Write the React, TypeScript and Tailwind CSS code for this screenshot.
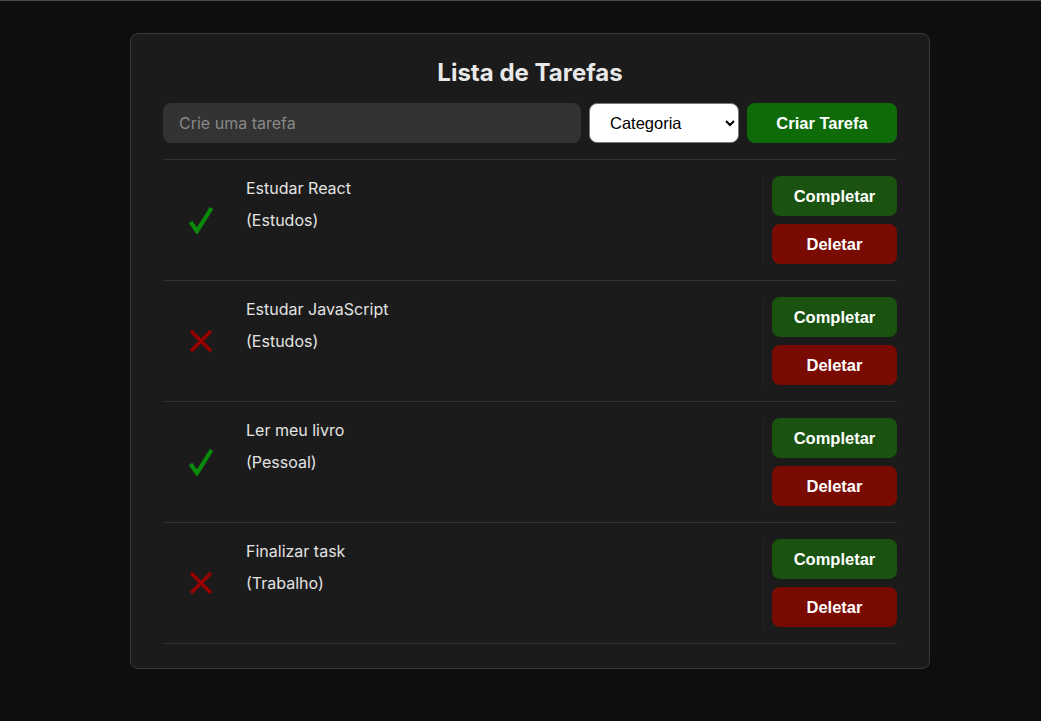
import React from "react";

type Task = { text: string; category: string; done: boolean };

const tasks: Task[] = [
  { text: "Estudar React", category: "Estudos", done: true },
  { text: "Estudar JavaScript", category: "Estudos", done: false },
  { text: "Ler meu livro", category: "Pessoal", done: true },
  { text: "Finalizar task", category: "Trabalho", done: false },
];

function CheckIcon() {
  return (
    <svg width="26" height="28" viewBox="0 0 26 28" fill="none">
      <path d="M2.5 16 L9 25 L23.5 2" stroke="#0a8a0a" strokeWidth="4.2" strokeLinecap="butt" strokeLinejoin="miter" />
    </svg>
  );
}

function CrossIcon() {
  return (
    <svg width="26" height="26" viewBox="0 0 26 26" fill="none">
      <path d="M3 3 L23 23 M23 3 L3 23" stroke="#990000" strokeWidth="3.6" />
    </svg>
  );
}

function TaskRow({ task }: { task: Task }) {
  return (
    <div className="flex items-center border-b border-[#333333] py-4">
      <div className="w-[75px] shrink-0 flex items-center justify-center">
        {task.done ? <CheckIcon /> : <CrossIcon />}
      </div>
      <div className="flex-1 self-start flex flex-col gap-2 pl-2 text-[16px] leading-6 text-[#e3e3e3] font-['Inter',sans-serif]">
        <p>{task.text}</p>
        <p>({task.category})</p>
      </div>
      <div className="flex flex-col gap-2 border-l border-[#262626] pl-2">
        <button className="w-[125px] h-10 rounded-lg bg-[#1a530f] text-white font-bold text-[16.5px] font-['Liberation_Sans',Arial,sans-serif]">
          Completar
        </button>
        <button className="w-[125px] h-10 rounded-lg bg-[#7a0b02] text-white font-bold text-[16.5px] font-['Liberation_Sans',Arial,sans-serif]">
          Deletar
        </button>
      </div>
    </div>
  );
}

export default function App() {
  return (
    <div className="min-h-screen bg-[#0e0e0e] border-t border-[#4a4a4a] pt-8 pb-12">
      <div className="ml-[130px] w-[800px] bg-[#1b1b1b] border border-[#3a3a3a] rounded-lg px-8 pt-[23px] pb-6">
        <h1 className="text-center text-[24px] leading-8 font-bold text-[#e8e8e8] mb-[14px] font-['Inter',sans-serif]">
          Lista de Tarefas
        </h1>
        <div className="flex gap-2">
          <input
            className="flex-1 h-10 rounded-lg bg-[#333333] px-4 text-[16px] text-[#e3e3e3] placeholder:text-[#888888] outline-none font-['Inter',sans-serif]"
            placeholder="Crie uma tarefa"
          />
          <select
            className="w-[150px] h-10 rounded-lg bg-white border border-[#767676] pl-4 pr-2 text-[16.5px] text-black font-['Liberation_Sans',Arial,sans-serif]"
            defaultValue=""
          >
            <option value="">Categoria</option>
            <option value="Trabalho">Trabalho</option>
            <option value="Pessoal">Pessoal</option>
            <option value="Estudos">Estudos</option>
          </select>
          <button className="w-[150px] h-10 rounded-lg bg-[#0f6b0a] text-white font-bold text-[16.5px] font-['Liberation_Sans',Arial,sans-serif]">
            Criar Tarefa
          </button>
        </div>
        <div className="mt-4 border-t border-[#333333]">
          {tasks.map((t) => (
            <TaskRow key={t.text} task={t} />
          ))}
        </div>
      </div>
    </div>
  );
}
